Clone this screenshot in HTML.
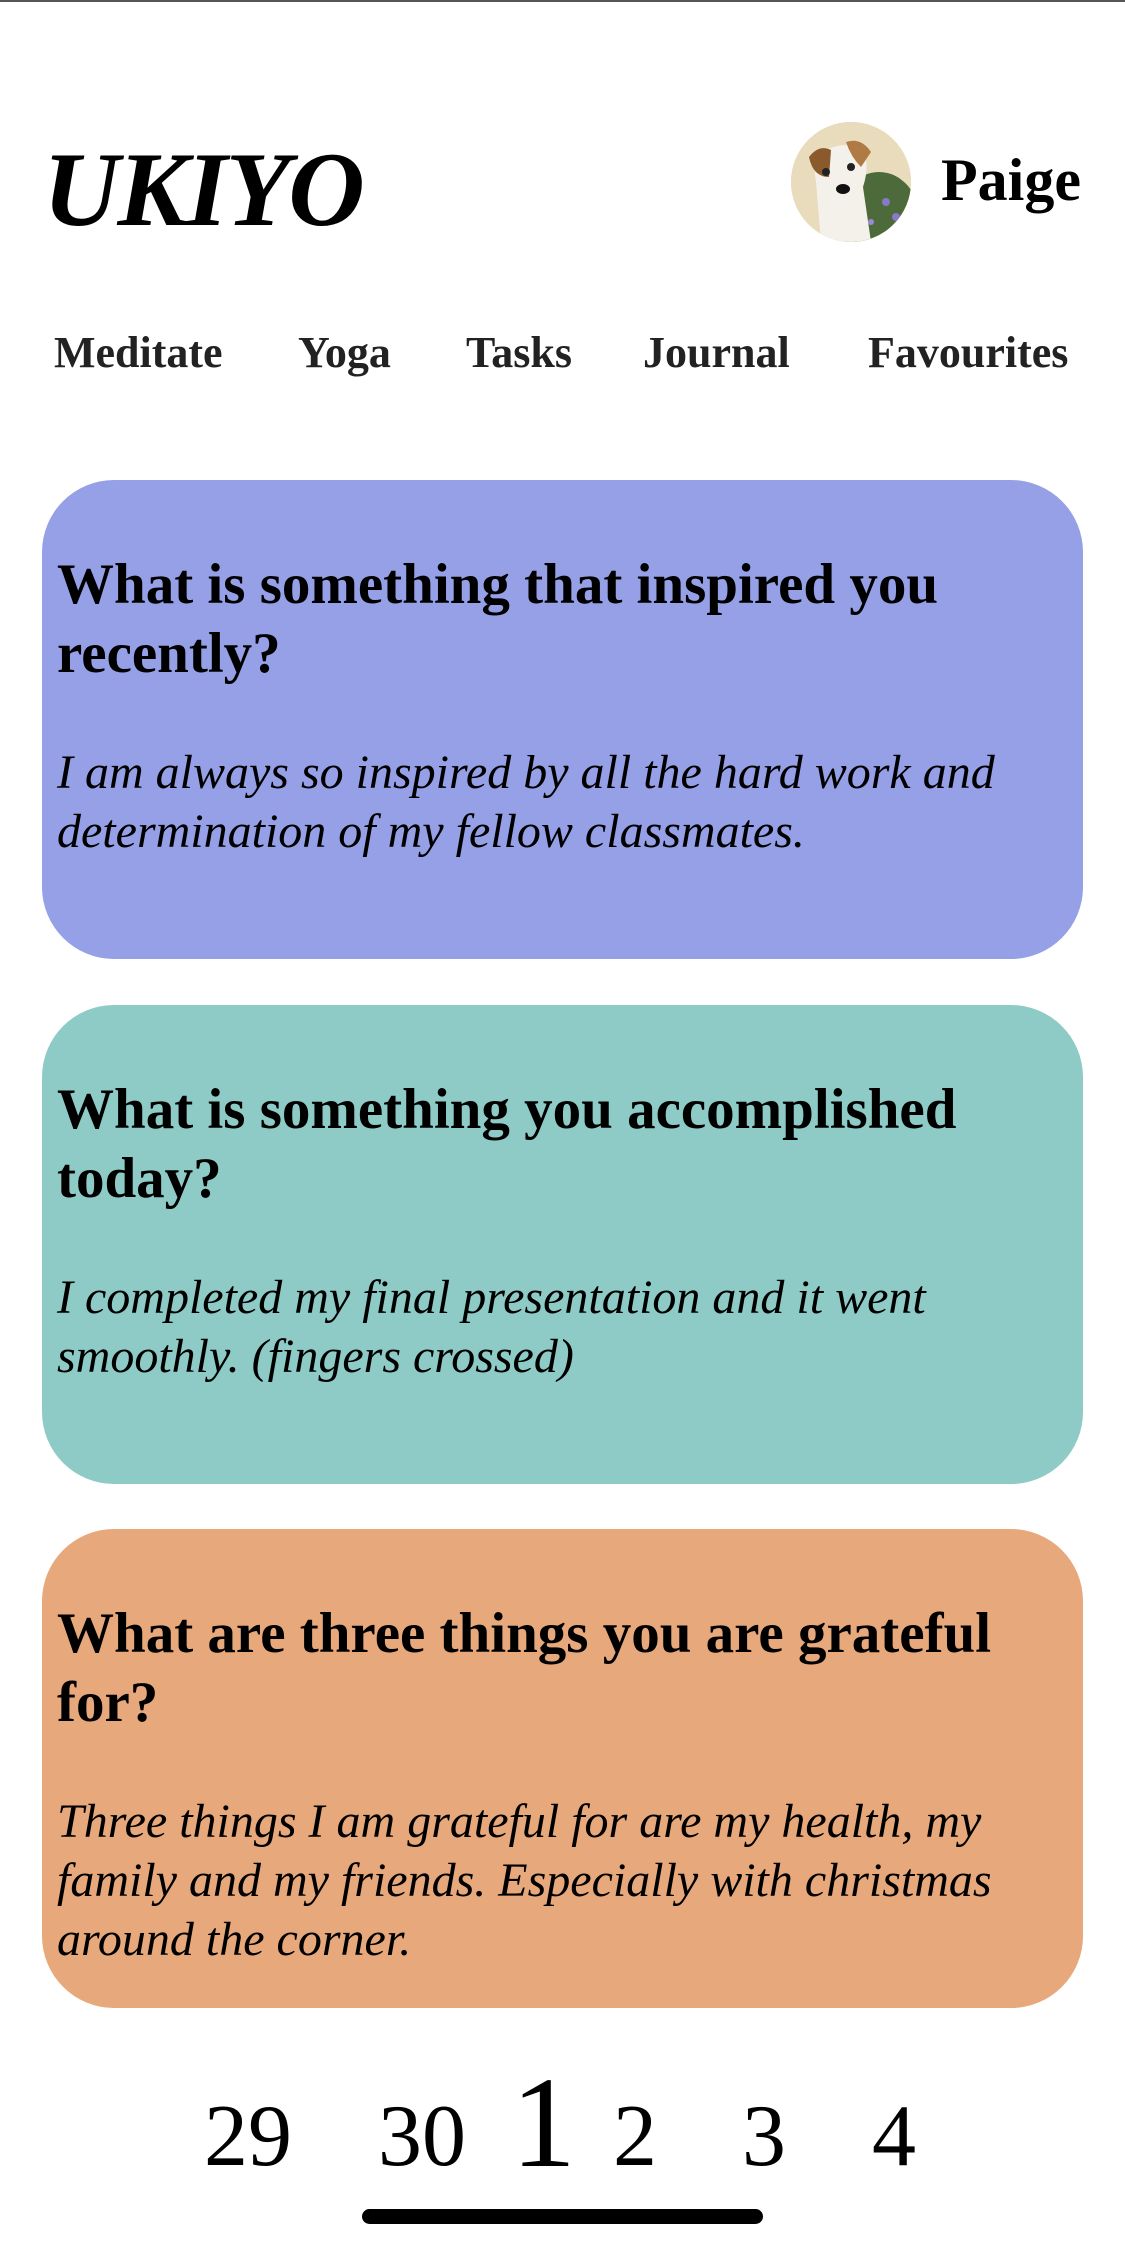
<!DOCTYPE html>
<html><head><meta charset="utf-8"><style>
*{margin:0;padding:0;box-sizing:border-box}
body{width:1125px;height:2247px;background:#fff;position:relative;overflow:hidden;font-family:"Liberation Serif",serif;color:#000}
.a{position:absolute;white-space:nowrap}
.topline{position:absolute;left:0;top:0;width:1125px;height:2px;background:#555}
.logo{left:43px;top:140px;font-size:106px;line-height:100px;font-weight:bold;font-style:italic;letter-spacing:-2px}
.name{left:941px;top:150px;font-size:60px;line-height:60px;font-weight:bold}
.nav{top:332px;font-size:44px;line-height:42px;font-weight:bold;color:#222}
.card{position:absolute;left:42px;width:1041px;height:479px;border-radius:72px}
.t{position:absolute;left:15px;top:70px;width:970px;font-size:57px;line-height:69px;font-weight:bold;white-space:normal}
.b{position:absolute;left:15px;top:263px;width:960px;font-size:48px;line-height:59px;font-style:italic;white-space:normal}
.d{top:2093px;font-size:88px;line-height:88px}
.avatar{position:absolute;left:791px;top:122px;width:120px;height:120px;border-radius:50%;overflow:hidden;background:#e6d7b4}
.bar{position:absolute;left:362px;top:2209px;width:401px;height:15px;border-radius:8px;background:#000}
</style></head><body>
<div class="topline"></div>
<div class="a logo">UKIYO</div>
<div class="avatar">
<svg width="120" height="120" viewBox="0 0 120 120">
<rect width="120" height="120" fill="#e9dcbc"/>
<ellipse cx="88" cy="95" rx="40" ry="45" fill="#4d6b3a"/>
<circle cx="95" cy="80" r="4" fill="#8a78c8"/><circle cx="105" cy="95" r="4" fill="#8a78c8"/><circle cx="80" cy="100" r="3" fill="#9a88d8"/>
<path d="M25 60 Q20 35 35 28 Q55 18 70 28 Q80 40 72 65 L80 120 L30 120 Z" fill="#f4f0ea"/>
<path d="M18 35 Q28 22 40 28 L38 55 Q22 55 18 35Z" fill="#8a5a2c"/>
<path d="M55 20 Q70 15 80 30 L70 45 Q60 35 55 20Z" fill="#b07a45"/>
<circle cx="35" cy="50" r="4" fill="#222"/><circle cx="60" cy="45" r="4" fill="#222"/>
<ellipse cx="52" cy="67" rx="7" ry="5" fill="#111"/>
</svg>
</div>
<div class="a name">Paige</div>
<div class="a nav" style="left:54px">Meditate</div>
<div class="a nav" style="left:298px">Yoga</div>
<div class="a nav" style="left:466px">Tasks</div>
<div class="a nav" style="left:643px">Journal</div>
<div class="a nav" style="left:868px">Favourites</div>

<div class="card" style="top:480px;background:#96a0e6">
<div class="t">What is something that inspired you recently?</div>
<div class="b">I am always so inspired by all the hard work and determination of my fellow classmates.</div>
</div>
<div class="card" style="top:1005px;background:#8ecbc6">
<div class="t">What is something you accomplished today?</div>
<div class="b">I completed my final presentation and it went smoothly. (fingers crossed)</div>
</div>
<div class="card" style="top:1529px;background:#e7a87b">
<div class="t">What are three things you are grateful for?</div>
<div class="b">Three things I am grateful for are my health, my family and my friends. Especially with christmas around the corner.</div>
</div>

<div class="a d" style="left:204px">29</div>
<div class="a d" style="left:378px">30</div>
<div class="a" style="left:511px;top:2058px;font-size:130px;line-height:130px">1</div>
<div class="a d" style="left:613px">2</div>
<div class="a d" style="left:742px">3</div>
<div class="a d" style="left:872px">4</div>
<div class="bar"></div>
</body></html>
